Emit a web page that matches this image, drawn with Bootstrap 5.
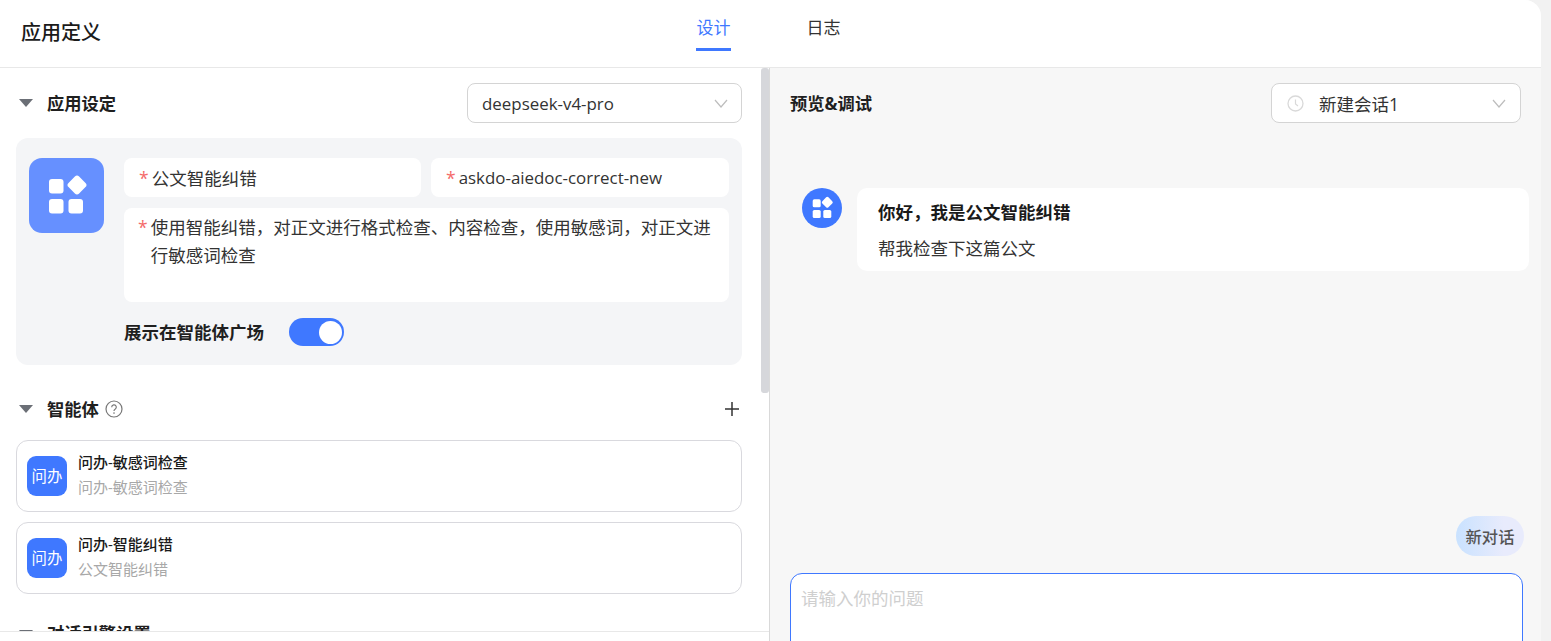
<!DOCTYPE html>
<html lang="zh-CN">
<head>
<meta charset="utf-8">
<title>应用定义</title>
<link rel="stylesheet" href="https://cdn.jsdelivr.net/npm/bootstrap@5.3.0/dist/css/bootstrap.min.css">
<style>
html,body{height:100%;overflow:hidden}
body{background:#f2f2f2;font-family:"Open Sans","Noto Sans CJK SC",sans-serif;font-size:17.5px;color:#262626;line-height:28px}
.shell{width:1541px;height:641px;background:#f7f7f7;border-top-right-radius:16px;overflow:hidden}
.topbar{height:68px;background:#fff;border-bottom:1px solid #e8e8e8;padding-left:21px;position:relative}
.page-title{font-size:20px;font-weight:500;color:#1a1a1a;line-height:66px;width:675px}
.tab-item{font-size:17px;width:35px;height:51px;line-height:56px;text-align:center;color:#333;margin-right:75px}
.tab-item.on{color:#3f78ff;border-bottom:3px solid #3f78ff}
.left-pane{width:770px;height:573px;background:#fff;border-right:1px solid #d9d9d9;position:relative}
.left-scroll{height:563px;overflow:hidden;padding:15px 27px 0 16px}
.left-foot{height:10px;border-top:1px solid #e8e8e8;background:#fff}
.scroll-thumb{position:absolute;right:0;top:0;width:8px;height:325px;background:#d6d7db;border-radius:3px}
.sec-head{height:40px}
.caret-ico{width:14px;height:8px;margin:0 14px 0 3px;flex:none}
.sec-name{font-size:17.3px;font-weight:700;color:#1f1f1f;line-height:30px;padding-top:1px}
.pick{height:40px;background:#fff;border:1px solid #d4d4d4;border-radius:8px;color:#333}
.pick-model{width:275px;padding:0 13px 0 14px}
.pick-chat{width:250px;padding:0 14px 0 15px}
.pick span{padding-top:1px}
.latin-text{font-size:16.9px}
.basic-box{background:#f4f5f7;border-radius:12px;margin-top:15px;height:227px;padding:20px 13px 0 13px}
.app-ico{width:75px;height:75px;flex:none;margin-right:20px}
.basic-fields{width:605px}
.field{background:#fff;border-radius:8px;height:39px;padding:6px 14px 0 15px;color:#333}
.field-a{width:297px;margin-right:10px}
.field-b{width:298px}
.field-c{height:94px;margin-top:11px;width:605px;padding:5px 14px 0 14px}
.req{color:#f46a6a;margin-right:3px;flex:none}
.show-row{margin-top:16px;height:28px}
.show-label{font-weight:700;color:#1f1f1f;font-size:17.5px;width:165px}
.toggle-pill{width:55px;height:28px;background:#3f78ff;border-radius:14px;padding:2.5px}
.toggle-knob{width:23px;height:23px;background:#fff;border-radius:50%}
.agent-head{margin-top:24px;height:40px}
.help-ico{width:18px;height:18px;margin-left:6px}
.plus-ico{width:16px;height:16px;margin-right:2px}
.agent-card{height:72px;border:1px solid #d9d9de;border-radius:12px;margin-top:10px;padding:15px 10px;background:#fff}
.agent-head + .agent-card{margin-top:11px}
.agent-ico{width:40px;height:40px;background:#3f78ff;color:#fff;border-radius:9px;font-size:15.4px;line-height:42px;text-align:center;margin-right:11px;flex:none}
.agent-title{font-size:15px;font-weight:500;color:#1a1a1a;line-height:14px;margin-top:-1px}
.agent-sub{font-size:15px;color:#a8a8a8;line-height:14px;margin-top:11px}
.cut-head{margin-top:24px}
.right-pane{width:771px;height:573px;padding:15px 20px 0 20px;position:relative}
.pre-title{font-size:17.3px;font-weight:700;color:#1f1f1f;padding-top:1px}
.chev{width:14px;height:9px;flex:none}
.clock-ico{width:17px;height:17px;margin-right:15px;flex:none}
.chat-area{height:450px;padding:65px 0 0 12px;margin-right:-8px}
.avatar-ico{width:40px;height:40px;margin-right:15px;flex:none}
.bubble{width:672px;height:83px;background:#fff;border-radius:10px;padding:10px 21px}
.bubble-title{font-weight:700;color:#1a1a1a;line-height:28px}
.bubble-sub{line-height:28px;margin-top:8px;color:#333}
.new-chat{position:absolute;right:17px;top:448px;width:68px;height:40px;border-radius:20px;background:linear-gradient(90deg,#c9e2ff,#e8ebfc 70%);color:#555;font-size:16.3px;font-weight:500;line-height:42px;text-align:center}
.ask-box{width:733px;height:120px;background:#fff;border:1px solid #3f78ff;border-radius:12px;padding:10px 10px;color:#cfcfcf}
</style>
</head>
<body>
<div class="shell">
  <header class="topbar d-flex align-items-start">
    <div class="page-title">应用定义</div>
    <div class="tab-item on">设计</div>
    <div class="tab-item">日志</div>
  </header>
  <main class="d-flex">
    <section class="left-pane">
      <div class="scroll-thumb"></div>
      <div class="left-scroll">
        <div class="sec-head d-flex align-items-center">
          <svg class="caret-ico" viewBox="0 0 14 8"><path d="M0 0H14L7 8Z" fill="#6b6f76"/></svg>
          <span class="sec-name flex-grow-1">应用设定</span>
          <div class="pick pick-model d-flex align-items-center justify-content-between">
            <span class="latin-text">deepseek-v4-pro</span>
            <svg class="chev" viewBox="0 0 14 9"><path d="M1 1L7 8L13 1" fill="none" stroke="#bdbdbd" stroke-width="1.2"/></svg>
          </div>
        </div>
        <div class="basic-box">
          <div class="d-flex">
            <svg class="app-ico" viewBox="0 0 75 75">
              <rect width="75" height="75" rx="13" fill="#6690ff"/>
              <rect x="20" y="21" width="14.5" height="14.5" rx="3" fill="#fff"/>
              <rect x="20" y="41" width="14.5" height="14.5" rx="3" fill="#fff"/>
              <rect x="39.5" y="41" width="14.5" height="14.5" rx="3" fill="#fff"/>
              <rect x="40.5" y="19.5" width="15" height="15" rx="3" fill="#fff" transform="rotate(45 48 27)"/>
            </svg>
            <div class="basic-fields">
              <div class="d-flex">
                <div class="field field-a d-flex"><span class="req">*</span><span>公文智能纠错</span></div>
                <div class="field field-b d-flex"><span class="req">*</span><span class="latin-text">askdo-aiedoc-correct-new</span></div>
              </div>
              <div class="field field-c d-flex"><span class="req">*</span><span>使用智能纠错，对正文进行格式检查、内容检查，使用敏感词，对正文进行敏感词检查</span></div>
              <div class="show-row d-flex align-items-center">
                <span class="show-label">展示在智能体广场</span>
                <div class="toggle-pill d-flex justify-content-end"><div class="toggle-knob"></div></div>
              </div>
            </div>
          </div>
        </div>
        <div class="agent-head d-flex align-items-center">
          <svg class="caret-ico" viewBox="0 0 14 8"><path d="M0 0H14L7 8Z" fill="#6b6f76"/></svg>
          <span class="sec-name">智能体</span>
          <svg class="help-ico" viewBox="0 0 18 18"><circle cx="9" cy="9" r="8" fill="none" stroke="#777" stroke-width="1.2"/><path d="M6.7 7.2a2.3 2.3 0 1 1 3.4 2c-.8.5-1.1.9-1.1 1.8" fill="none" stroke="#777" stroke-width="1.2"/><circle cx="9" cy="13.1" r=".8" fill="#777"/></svg>
          <span class="flex-grow-1"></span>
          <svg class="plus-ico" viewBox="0 0 16 16"><path d="M8 1V15M1 8H15" stroke="#333" stroke-width="1.5"/></svg>
        </div>
        <div class="agent-card d-flex">
          <div class="agent-ico">问办</div>
          <div><div class="agent-title">问办-敏感词检查</div><div class="agent-sub">问办-敏感词检查</div></div>
        </div>
        <div class="agent-card d-flex">
          <div class="agent-ico">问办</div>
          <div><div class="agent-title">问办-智能纠错</div><div class="agent-sub">公文智能纠错</div></div>
        </div>
        <div class="cut-head d-flex align-items-center">
          <svg class="caret-ico" viewBox="0 0 14 8"><path d="M0 0H14L7 8Z" fill="#6b6f76"/></svg>
          <span class="sec-name">对话引擎设置</span>
        </div>
      </div>
      <div class="left-foot"></div>
    </section>
    <section class="right-pane">
      <div class="sec-head d-flex align-items-center justify-content-between">
        <span class="pre-title">预览&amp;调试</span>
        <div class="pick pick-chat d-flex align-items-center ms-auto">
          <svg class="clock-ico" viewBox="0 0 17 17"><circle cx="8.5" cy="8.5" r="7.5" fill="none" stroke="#d9d9d9" stroke-width="1.3"/><path d="M8.5 4.5V9L11 11" fill="none" stroke="#d9d9d9" stroke-width="1.2"/></svg>
          <span class="flex-grow-1">新建会话1</span>
          <svg class="chev" viewBox="0 0 14 9"><path d="M1 1L7 8L13 1" fill="none" stroke="#bdbdbd" stroke-width="1.2"/></svg>
        </div>
      </div>
      <div class="chat-area d-flex align-items-start">
        <svg class="avatar-ico" viewBox="0 0 40 40">
          <circle cx="20" cy="20" r="20" fill="#3f78ff"/>
          <rect x="10.7" y="11.3" width="8" height="8" rx="1.6" fill="#fff"/>
          <rect x="10.7" y="22" width="8" height="8" rx="1.6" fill="#fff"/>
          <rect x="21.3" y="22" width="8" height="8" rx="1.6" fill="#fff"/>
          <rect x="21" y="10" width="8.6" height="8.6" rx="1.6" fill="#fff" transform="rotate(45 25.3 14.3)"/>
        </svg>
        <div class="bubble">
          <div class="bubble-title">你好，我是公文智能纠错</div>
          <div class="bubble-sub">帮我检查下这篇公文</div>
        </div>
      </div>
      <div class="new-chat">新对话</div>
      <div class="ask-box">请输入你的问题</div>
    </section>
  </main>
</div>
<script src="https://cdn.jsdelivr.net/npm/bootstrap@5.3.0/dist/js/bootstrap.bundle.min.js"></script>
</body>
</html>
